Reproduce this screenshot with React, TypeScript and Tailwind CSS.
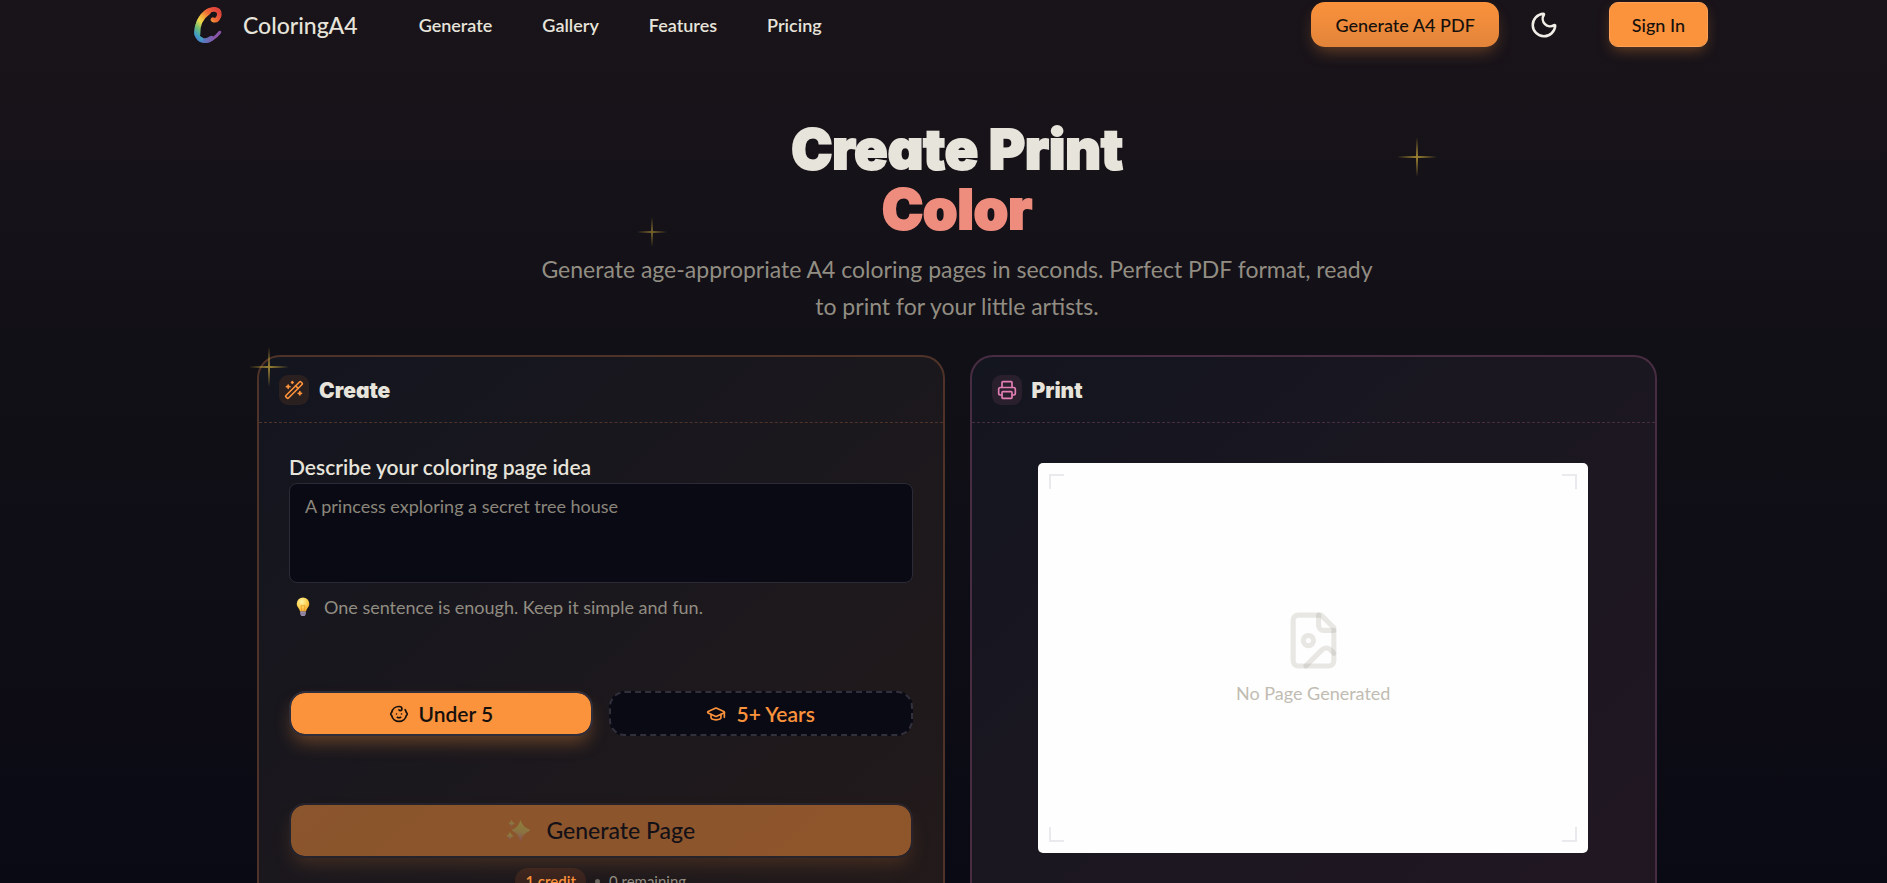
import React, { useState } from "react"
import { Baby, GraduationCap, Moon, Printer, WandSparkles } from "lucide-react"

const navLinks = ["Generate", "Gallery", "Features", "Pricing"]

function Logo() {
  return (
    <svg className="w-9 h-9" viewBox="30 21 108 108" fill="none" strokeLinecap="round">
      <defs>
        <linearGradient id="logo-body" gradientUnits="userSpaceOnUse" x1="122" y1="42" x2="52" y2="120">
          <stop offset="0" stopColor="#e2453c" />
          <stop offset="0.22" stopColor="#ee6a35" />
          <stop offset="0.38" stopColor="#f3a63a" />
          <stop offset="0.55" stopColor="#ecd94c" />
          <stop offset="0.74" stopColor="#6dbb72" />
          <stop offset="0.9" stopColor="#3f9fc4" />
          <stop offset="1" stopColor="#4b7fcb" />
        </linearGradient>
        <linearGradient id="logo-tail" gradientUnits="userSpaceOnUse" x1="56" y1="0" x2="104" y2="0">
          <stop offset="0" stopColor="#4389c9" />
          <stop offset="1" stopColor="#8a55a8" />
        </linearGradient>
      </defs>
      <path d="M58 114C68 128 84 126 96 118S114 104 119 97" stroke="url(#logo-tail)" strokeWidth="9" />
      <path d="M60 117C70 125 84 122 94 115" stroke="url(#logo-tail)" strokeWidth="15" />
      <path
        d="M99 59C109 65 119 52 118 41C117 26 96 23 79 37C60 52 48 78 50 100C51 110 55 115 62 118"
        stroke="url(#logo-body)"
        strokeWidth="14"
      />
      <path d="M84 35C62 50 51 76 52 102" stroke="url(#logo-body)" strokeWidth="18" />
    </svg>
  )
}

function Twinkle({ className }: { className: string }) {
  return (
    <span aria-hidden="true" className={`absolute pointer-events-none ${className}`}>
      <span className="absolute inset-x-0 top-1/2 h-0.5 -translate-y-1/2 bg-linear-to-r from-transparent via-[#d4b03c] to-transparent" />
      <span className="absolute inset-y-0 left-1/2 w-0.5 -translate-x-1/2 bg-linear-to-b from-transparent via-[#d4b03c] to-transparent" />
    </span>
  )
}

function Bulb() {
  return (
    <svg className="w-5 h-5" viewBox="0 0 20 20">
      <defs>
        <radialGradient id="bulb-glass" cx="0.4" cy="0.3" r="0.75">
          <stop offset="0" stopColor="#fff3a8" />
          <stop offset="0.5" stopColor="#fdd458" />
          <stop offset="1" stopColor="#f3a42c" />
        </radialGradient>
      </defs>
      <path
        d="M10 .5a6.3 6.3 0 0 0-6.3 6.3c0 2.6 1.5 3.8 2.5 5.4.5.8.6 1.6.8 2.3h6c.2-.7.3-1.5.8-2.3 1-1.6 2.5-2.8 2.5-5.4A6.3 6.3 0 0 0 10 .5z"
        fill="url(#bulb-glass)"
      />
      <path d="M8.8 14 8 8.5q1 1 2 0 1 1 2 0L11.200 14" fill="none" stroke="#e9952a" strokeWidth="0.8" />
      <path d="M7.200 14.500h5.600v2.600l-1.200 1.900H8.400l-1.200-1.900z" fill="#a99bb8" />
      <path d="M7.200 16.200h5.600M7.800 17.900h4.400" stroke="#6f6182" strokeWidth="0.7" />
    </svg>
  )
}

function Sparkles() {
  return (
    <svg className="w-6 h-6" viewBox="0 0 24 24">
      <defs>
        <linearGradient id="sparkle-fill" x1="0.6" y1="0" x2="0.4" y2="1">
          <stop offset="0" stopColor="#ffe95a" />
          <stop offset="0.55" stopColor="#f7cc66" />
          <stop offset="1" stopColor="#f0829a" />
        </linearGradient>
      </defs>
      <g fill="url(#sparkle-fill)">
        <path d="M14.500 1q2 7 8.800 9.400c1 .4 1 1.200 0 1.600Q16.500 14.500 14.500 23q-2-8.500-7.800-11c-1-.4-1-1.200 0-1.600Q12.500 8 14.500 1z" />
        <path d="M5.500 1q.9 2.800 3.200 3.500Q6.400 5.300 5.500 8.200 4.600 5.300 2.300 4.500 4.600 3.800 5.500 1z" />
        <path d="M4 13q1 3 3.600 3.900Q5 18 4 21q-1-3-3.600-4.100Q3 16 4 13z" />
      </g>
    </svg>
  )
}

function PageIcon() {
  return (
    <svg
      className="w-[61px] h-[61px] text-[#928d7e]/20"
      viewBox="0 0 24 24"
      fill="none"
      stroke="currentColor"
      strokeWidth="2"
      strokeLinecap="round"
      strokeLinejoin="round"
    >
      <path d="M15 2H6a2 2 0 0 0-2 2v16a2 2 0 0 0 2 2h12a2 2 0 0 0 2-2V7Z" />
      <path d="M14 2v4a2 2 0 0 0 2 2h4" />
      <circle cx="10" cy="12" r="2" />
      <path d="m20 17-1.296-1.296a2.410 2.410 0 0 0-3.408 0L9 22" />
    </svg>
  )
}

const displayFont =
  "font-['Inter',sans-serif] font-black [font-feature-settings:'cv11']"

export default function App() {
  const [idea, setIdea] = useState("")

  const handleSubmit = (e: React.FormEvent) => {
    e.preventDefault()
  }

  return (
    <div className="h-screen overflow-y-auto [scrollbar-width:none] pl-[27px] bg-linear-to-b from-[#19141a] via-[#100f16] to-[#0a0a14] font-['Lato',sans-serif] text-[#e7e4db]">
      {/* Header */}
      <header className="mx-auto flex max-w-[1536px] items-center pt-0.5 pr-[17px] pl-px">
        <a href="#" className="flex items-center gap-[17px]">
          <Logo />
          <span className="text-[23px] leading-7 font-medium">ColoringA4</span>
        </a>
        <nav className="ml-[61px] flex gap-[50px]">
          {navLinks.map((link) => (
            <a key={link} href="#" className="text-lg leading-7 font-semibold">
              {link}
            </a>
          ))}
        </nav>
        <div className="ml-auto flex items-center gap-[30px] text-lg font-medium text-[#16100c]">
          <button className="h-[45px] px-6 rounded-[14px] bg-linear-to-b from-[#fb923c] to-[#e2843a] shadow-[0_8px_16px_-4px_rgba(251,146,60,0.35)]">
            Generate A4 PDF
          </button>
          <button aria-label="Toggle theme" className="text-[#f1eee8]">
            <Moon size={30} strokeWidth={2} />
          </button>
          <button className="ml-5 h-[45px] px-[22px] rounded-[9px] border border-[#fca155] bg-[#fb923c] shadow-[0_6px_14px_-3px_rgba(251,146,60,0.35)]">
            Sign In
          </button>
        </div>
      </header>

      <main className="relative mx-auto max-w-[1400px]">
        {/* Hero */}
        <section className="pt-[72px] text-center">
          <h1 className={`text-[55px] leading-[60px] [-webkit-text-stroke:2px_currentColor] ${displayFont}`}>
            <span className="block">Create Print</span>
            <span className="block text-[#ee8c7e]">Color</span>
          </h1>
          <p className="mx-auto mt-3 max-w-[850px] text-[23px] leading-[37px] text-[#928d82]">
            Generate age-appropriate A4 coloring pages in seconds. Perfect PDF format, ready to print for
            your little artists.
          </p>
        </section>

        <Twinkle className="left-[1140px] top-[90px] w-10 h-10 opacity-70" />
        <Twinkle className="left-[380px] top-[170px] w-[30px] h-[30px] opacity-50" />
        <Twinkle className="left-[-8px] top-[300px] w-10 h-10 z-10 opacity-70" />

        <div className="mt-[30px] grid gap-[25px] lg:grid-cols-2">
          {/* Create panel */}
          <section className="rounded-[23px] border-2 border-[#4f3328] bg-linear-to-br from-[#13151f] via-[#1b181d] to-[#231a1a]">
            <div className="flex items-center gap-2.5 border-b border-dashed border-[#4f3328] px-5 pt-[18px] pb-[17px]">
              <span className="flex size-[30px] items-center justify-center rounded-[9px] bg-[#2b2020] text-[#fb923c]">
                <WandSparkles size={20} />
              </span>
              <h2 className={`text-[21px] leading-[29px] ${displayFont}`}>Create</h2>
            </div>
            <form onSubmit={handleSubmit} className="p-[30px] pb-10">
              <label htmlFor="idea" className="block text-[21px] leading-7 font-semibold">
                Describe your coloring page idea
              </label>
              <textarea
                id="idea"
                value={idea}
                onChange={(e) => setIdea(e.target.value)}
                placeholder="A princess exploring a secret tree house"
                className="mt-0.5 block h-[100px] w-full resize-none rounded-lg border border-[#2b2a36] bg-[#0a0a14] px-[15px] py-2 text-lg leading-7 placeholder:text-[#8b867b] focus:outline-none"
              />
              <p className="mt-2.5 flex items-center gap-[11px] px-1 text-lg leading-7 text-[#928d82]">
                <Bulb />
                One sentence is enough. Keep it simple and fun.
              </p>

              <div className="mt-[70px] grid grid-cols-2 gap-4 text-[21px] font-semibold">
                <button
                  type="button"
                  aria-pressed="true"
                  className="flex h-[45px] items-center justify-center gap-2.5 rounded-2xl border-2 border-[#2f2d3a] bg-[#fb923c] bg-clip-padding text-[#16100c] shadow-[0_10px_18px_-4px_rgba(251,146,60,0.35)]"
                >
                  <Baby size={20} />
                  Under 5
                </button>
                <button
                  type="button"
                  aria-pressed="false"
                  className="flex h-[45px] items-center justify-center gap-2.5 rounded-2xl border-2 border-dashed border-[#32303d] bg-[#0a0a14] text-[#fb923c]"
                >
                  <GraduationCap size={20} />
                  5+ Years
                </button>
              </div>

              <button
                type="submit"
                disabled
                className="mt-[67px] flex h-[55px] w-full items-center justify-center gap-4 rounded-2xl border-2 border-[#2f2d3a] bg-[#fb923c] bg-clip-padding text-[23px] font-medium text-[#0a0a14] opacity-50 shadow-[0_10px_18px_-4px_rgba(251,146,60,0.35)]"
              >
                <Sparkles />
                Generate Page
              </button>
              <p className="mt-2.5 flex items-center justify-center gap-[9px] text-[15px] leading-6 text-[#928d82]">
                <span className="rounded-full bg-[#38231d] px-2.5 py-px font-semibold text-[#fb923c]">1 credit</span>
                <span className="size-[5px] rounded-full bg-[#6b675f]" />
                0 remaining
              </p>
            </form>
          </section>

          {/* Print panel */}
          <section className="rounded-[23px] border-2 border-[#482d42] bg-linear-to-br from-[#13151f] via-[#1b1720] to-[#211722]">
            <div className="flex items-center gap-2.5 border-b border-dashed border-[#482d42] px-5 pt-[18px] pb-[17px]">
              <span className="flex size-[30px] items-center justify-center rounded-[9px] bg-[#2a1f2d] text-[#e17fb5]">
                <Printer size={20} />
              </span>
              <h2 className={`text-[21px] leading-[29px] ${displayFont}`}>Print</h2>
            </div>
            <div className="px-[30px] py-10">
              <div className="relative mx-auto flex aspect-[550/390] max-w-[550px] flex-col items-center justify-center rounded-[5px] bg-[#fefefe]">
                <span className="absolute left-[11px] top-[11px] size-[15px] border-l-2 border-t-2 border-[#e9e9ee]" />
                <span className="absolute right-[11px] top-[11px] size-[15px] border-r-2 border-t-2 border-[#e9e9ee]" />
                <span className="absolute bottom-[11px] left-[11px] size-[15px] border-b-2 border-l-2 border-[#e9e9ee]" />
                <span className="absolute bottom-[11px] right-[11px] size-[15px] border-b-2 border-r-2 border-[#e9e9ee]" />
                <PageIcon />
                <p className="mt-2 text-lg leading-7 text-[#c1bcb2]">No Page Generated</p>
              </div>
            </div>
          </section>
        </div>
      </main>
    </div>
  )
}
